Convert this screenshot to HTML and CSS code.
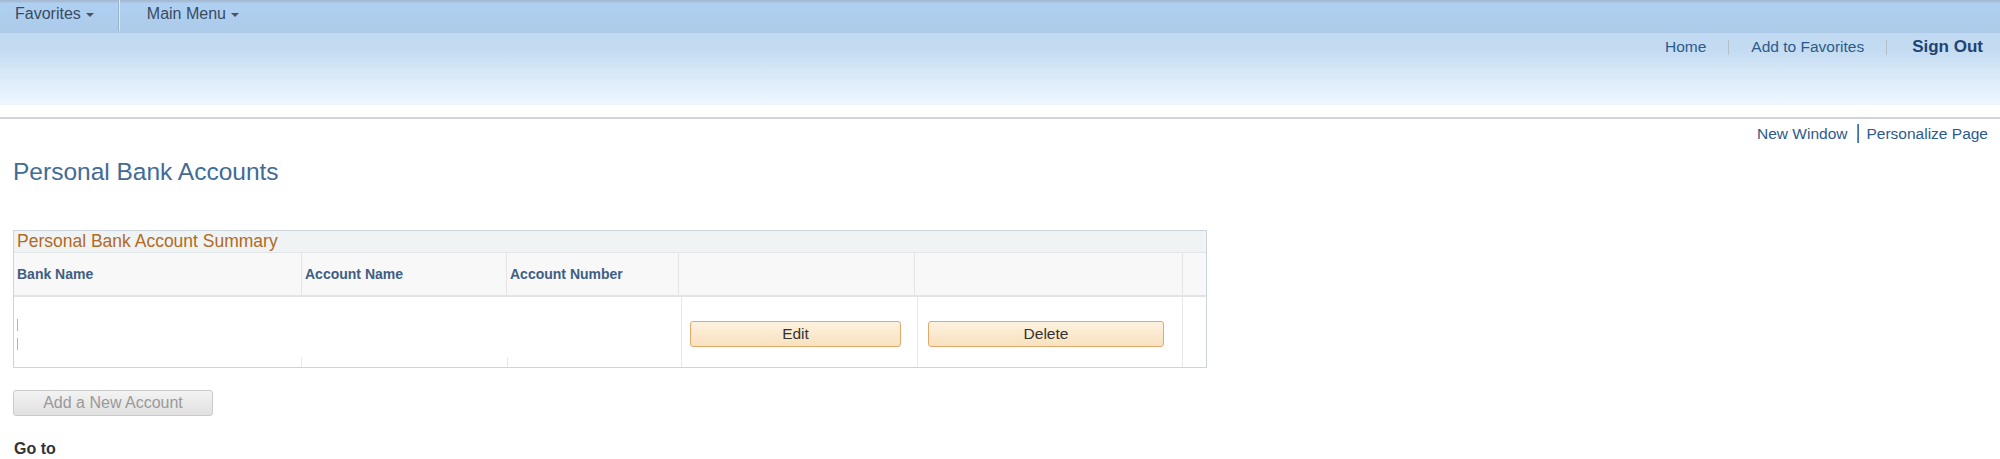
FILE: index.html
```html
<!DOCTYPE html>
<html lang="en">
<head>
<meta charset="utf-8">
<title>Personal Bank Accounts</title>
<link rel="stylesheet" href="styles.css">
</head>
<body>
<header class="topbar">
  <nav class="menu">
    <span class="menu-item fav">Favorites<i class="caret"></i></span>
    <span class="menu-sep"></span>
    <span class="menu-item main">Main Menu<i class="caret"></i></span>
  </nav>
</header>
<div class="banner">
  <nav class="links">
    <a class="link">Home</a>
    <span class="link-sep"></span>
    <a class="link">Add to Favorites</a>
    <span class="link-sep"></span>
    <a class="link signout">Sign Out</a>
  </nav>
</div>
<div class="rule"></div>
<div class="pagelinks">
  <a class="link">New Window</a>
  <span class="page-sep"></span>
  <a class="link">Personalize Page</a>
</div>
<main class="content">
  <h1 class="title">Personal Bank Accounts</h1>
  <section class="grid">
    <div class="grid-title">Personal Bank Account Summary</div>
    <div class="grid-head">
      <div class="hcell">Bank Name</div>
      <div class="hcell">Account Name</div>
      <div class="hcell">Account Number</div>
      <div class="hcell"></div>
      <div class="hcell"></div>
      <div class="hcell last"></div>
    </div>
    <div class="grid-row">
      <div class="dcell short marks"><span class="mark"></span><span class="mark"></span></div>
      <div class="dcell short"></div>
      <div class="dcell full"></div>
      <div class="dcell full"><button class="btn btn-edit">Edit</button></div>
      <div class="dcell full"><button class="btn btn-delete">Delete</button></div>
      <div class="dcell"></div>
    </div>
  </section>
  <button class="btn-add" disabled>Add a New Account</button>
  <div class="goto">Go to</div>
</main>
</body>
</html>
```
FILE: styles.css
```css
* { box-sizing: border-box; }
body {
  margin: 0;
  font-family: "Liberation Sans", Arial, sans-serif;
  background: #fff;
  color: #333;
}
.topbar {
  height: 33px;
  background: linear-gradient(to bottom, #a4b9d0 0, #a8c0da 2px, #afd0f2 3px, #adcbe9 100%);
}
.menu {
  display: flex;
  height: 100%;
  padding-left: 15px;
}
.menu-item {
  display: flex;
  align-items: center;
  font-size: 16px;
  color: #384b62;
  padding-bottom: 6px;
}
.fav { padding-right: 24px; }
.main { padding-left: 27px; }
.caret {
  width: 0;
  height: 0;
  border-left: 4px solid transparent;
  border-right: 4px solid transparent;
  border-top: 4px solid #4a5360;
  margin-left: 5px;
  margin-top: 2px;
}
.menu-sep {
  width: 2px;
  margin-bottom: 2px;
  border-left: 1px solid #9cb3cc;
  border-right: 1px solid #dce8f4;
}
.banner {
  height: 72px;
  background: linear-gradient(to bottom, #c1daf1 0%, #c4dcf2 25%, #dcebfa 65%, #eff7fe 100%);
}
.links {
  display: flex;
  justify-content: flex-end;
  align-items: center;
  gap: 22px;
  height: 28px;
  padding-right: 17px;
}
.link {
  font-size: 15.5px;
  color: #2c5a8c;
  line-height: 18px;
}
.signout {
  font-size: 17px;
  font-weight: bold;
  color: #1e4473;
  margin-left: 3px;
}
.link-sep {
  width: 1px;
  height: 15px;
  background: #b3bfcb;
}
.rule {
  height: 14px;
  border-bottom: 2px solid #cdd4db;
}
.pagelinks {
  display: flex;
  justify-content: flex-end;
  align-items: center;
  padding: 5px 12px 0 0;
}
.page-sep {
  width: 2px;
  height: 19px;
  margin: 0 8px 0 9px;
  background: linear-gradient(to right, #b8863f 50%, #3b72aa 50%);
}
.content {
  padding-left: 13px;
}
.title {
  margin: 15px 0 44px;
  font-size: 24.5px;
  line-height: 28px;
  font-weight: normal;
  color: #426b96;
}
.grid {
  width: 1194px;
  border: 1px solid #cdd5dc;
}
.grid-title {
  height: 22px;
  padding-left: 3px;
  font-size: 17.5px;
  line-height: 21px;
  color: #b06a24;
  background: #f0f3f4;
  border-bottom: 1px solid #e1e6e9;
}
.grid-head {
  display: grid;
  grid-template-columns: 288px 205px 172px 236px 268px 1fr;
  height: 44px;
  background: #f8f8f8;
  border-bottom: 2px solid #e3e3e3;
}
.hcell {
  display: flex;
  align-items: center;
  padding-left: 3px;
  padding-bottom: 1px;
  font-size: 14px;
  font-weight: bold;
  color: #3f5e83;
  border-right: 1px solid #e4e4e4;
}
.hcell.last { border-right: none; }
.grid-row {
  display: grid;
  grid-template-columns: 288px 206px 174px 236px 265px 1fr;
  height: 70px;
}
.dcell {
  padding-top: 24px;
}
.dcell.full { border-right: 1px solid #e8e8e8; }
.dcell.short {
  background: linear-gradient(#e8e8e8, #e8e8e8) right bottom / 1px 10px no-repeat;
}
.marks {
  display: flex;
  flex-direction: column;
  gap: 7px;
  padding: 22px 0 0 3px;
}
.mark {
  width: 1px;
  height: 12px;
  background: #dcab7a;
}
.btn {
  display: block;
  height: 26px;
  font-family: "Liberation Sans", Arial, sans-serif;
  font-size: 15.5px;
  color: #333;
  background: linear-gradient(to bottom, #fdf2e0, #f8e1bd);
  border: 1px solid #e2a96f;
  border-radius: 3px;
  padding: 0;
}
.btn-edit { width: 211px; margin-left: 8px; }
.btn-delete { width: 236px; margin-left: 10px; }
.btn-add {
  display: block;
  width: 200px;
  height: 26px;
  margin-top: 22px;
  padding: 0;
  font-family: "Liberation Sans", Arial, sans-serif;
  font-size: 16px;
  color: #999;
  background: linear-gradient(to bottom, #f3f3f3, #e1e1e1);
  border: 1px solid #cacaca;
  border-radius: 3px;
}
.goto {
  margin-top: 24px;
  padding-left: 1px;
  font-size: 16px;
  line-height: 18px;
  font-weight: bold;
  color: #333;
}
```
